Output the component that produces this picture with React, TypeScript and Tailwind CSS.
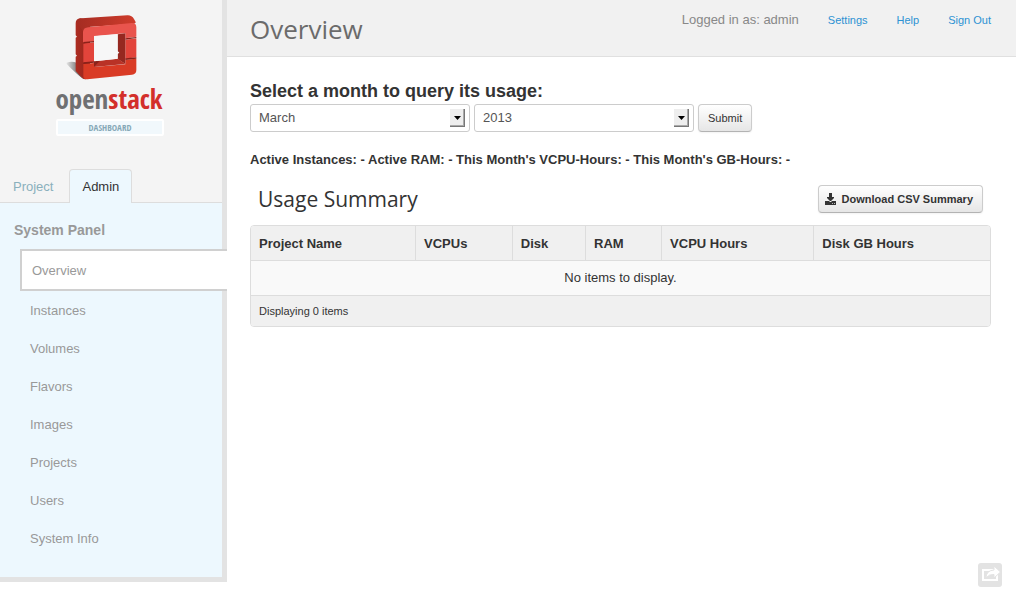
import type { ReactNode } from "react";

const NAV_ITEMS = ["Instances", "Volumes", "Flavors", "Images", "Projects", "Users", "System Info"];
const MONTHS = ["January", "February", "March", "April", "May", "June", "July", "August", "September", "October", "November", "December"];
const YEARS = ["2011", "2012", "2013"];

function CubeLogo() {
  return (
    <svg width="74" height="67" viewBox="75 40 222 201" aria-hidden="true">
      <defs>
        <linearGradient id="shade" x1="1" y1="0" x2="0" y2="0">
          <stop offset="0" stopColor="#444" />
          <stop offset="1" stopColor="#444" stopOpacity="0.1" />
        </linearGradient>
        <linearGradient id="side" x1="0" y1="0" x2="1" y2="0">
          <stop offset="0" stopColor="#ad2c21" />
          <stop offset="1" stopColor="#94261d" />
        </linearGradient>
        <linearGradient id="top" x1="0" y1="0" x2="1" y2="0">
          <stop offset="0" stopColor="#a52c22" />
          <stop offset="1" stopColor="#cf3c2c" />
        </linearGradient>
      </defs>
      <path d="M80 186Q95 181 110 186V208L130 235Q108 219 80 190Z" fill="url(#shade)" />
      <path d="M107 68Q107 55 121 53L150 60L150 226L136 236Q130 236 126 231L107 211V168L111 165L107 161V111L111 108L107 104Z" fill="url(#side)" />
      <path d="M109 63Q113 54 125 53L262 44Q275 43 282 55L287 64Q288 69 277 70L143 79Q131 81 129 92Z" fill="url(#top)" />
      <path d="M129 94Q130 81 144 80L275 67Q289 66 289 80V108L256 113V98L162 106V122L129 126Z" fill="#e9544d" />
      <path d="M130 129L162 125V183L130 186Z" fill="#e2443b" />
      <path d="M256 117L289 113V170L256 174Z" fill="#e2443b" />
      <path d="M130 190L162 187V199L256 191V177L289 174V208Q289 221 276 222L142 236Q130 237 130 226Z" fill="#d93b25" />
      <path d="M130 124L162 121V125L130 128ZM256 113L289 109V112L256 117ZM130 185L162 182V186L130 190ZM256 173L289 170V174L256 178Z" fill="#8a2119" />
      <path d="M233 101L256 98V190L233 175Z" fill="#952820" />
      <path d="M162 182L234 174L256 190L162 199Z" fill="#b93226" />
      <path d="M162 182L180 180L164 197H162Z" fill="#8c231b" />
      <path d="M163 107L233 101V151L238 156L233 160V174L163 182Z" fill="#f7f7f7" />
    </svg>
  );
}

function Picker({ id, label, value, options }: { id: string; label: string; value: string; options: string[] }) {
  return (
    <div className="relative w-[220px]">
      <select
        id={id}
        aria-label={label}
        defaultValue={value}
        className="block h-7 w-full appearance-none rounded-[3px] border border-[#ccc] bg-white pl-2 pr-6 text-[13px] text-[#555]"
      >
        {options.map((option) => (
          <option key={option}>{option}</option>
        ))}
      </select>
      <span className="pointer-events-none absolute right-[5px] top-[5px] flex h-[18px] w-[15px] items-center justify-center border-b border-r border-[#777] bg-[#eee] shadow-[inset_-1px_-1px_0_#aaa]">
        <svg width="7" height="4" viewBox="0 0 7 4" aria-hidden="true">
          <path d="M0 0H7L3.5 4Z" fill="#000" />
        </svg>
      </span>
    </div>
  );
}

const BUTTON =
  "flex h-7 cursor-pointer items-center rounded-[4px] border border-[#ccc] border-b-[#b3b3b3] bg-linear-to-b from-white to-[#e6e6e6] text-[11px] text-[#333] shadow-[0_1px_2px_rgba(0,0,0,0.05)]";

function HeadCell({ width, children }: { width?: string; children: ReactNode }) {
  return (
    <th scope="col" className={`${width ?? ""} h-[35px] border-b border-l border-[#ddd] px-2 pt-[2px] text-left font-bold first:border-l-0`}>
      {children}
    </th>
  );
}

export default function App() {
  return (
    <div className="flex min-h-screen items-start bg-white font-['Liberation_Sans',Arial,sans-serif] text-[13px] leading-[18px] text-[#333]">
      <aside className="w-[227px] shrink-0 border-b-[5px] border-[#e3e3e3] bg-[#edf8fe]">
        <div className="border-r-[5px] border-[#e3e3e3] bg-[#f4f4f4]">
          <a href="#home" aria-label="OpenStack Dashboard" className="flex flex-col items-center pr-[2px] pt-[14px]">
            <span className="pr-4">
              <CubeLogo />
            </span>
            <span className="flex h-9 items-center pr-[2px] font-['Open_Sans_Condensed','DejaVu_Sans_Condensed',sans-serif] text-[27px] leading-9 text-[#6f7072]">
              open<span className="font-bold text-[#d32f2b]">stack</span>
            </span>
            <span className="mt-[2px] flex h-[17px] w-[108px] items-center justify-center rounded-[2px] border-2 border-white bg-[#f1f8fc] font-['Open_Sans_Condensed','DejaVu_Sans_Condensed',sans-serif] text-[9px] text-[#86a8b7]">
              DASHBOARD
            </span>
          </a>
          <nav aria-label="Dashboards" className="mt-[33px] flex h-[34px] border-b border-[#ddd]">
            <a href="#project" className="px-[13px] pt-[9px] text-[#8ab0bc]">
              Project
            </a>
            <a href="#admin" className="ml-[3px] h-[34px] rounded-t-[4px] border border-b-0 border-[#ddd] bg-[#edf8fe] px-3 pt-2 text-[#333]">
              Admin
            </a>
          </nav>
        </div>
        <div className="flex text-[#999]">
          <nav aria-labelledby="panel-title" className="min-w-0 grow pb-5">
            <h4 id="panel-title" className="mb-[10px] ml-[14px] mt-[18px] text-sm font-bold leading-[18px]">
              System Panel
            </h4>
            <ul>
              <li className="relative ml-5 mr-[-5px]">
                <a href="#overview" className="flex h-[42px] items-center border-2 border-r-0 border-[#d0d0d0] bg-white pl-[10px] pt-[2px]">
                  Overview
                </a>
              </li>
              {NAV_ITEMS.map((item) => (
                <li key={item}>
                  <a href={`#${item.toLowerCase().replace(" ", "-")}`} className="flex h-[38px] items-center pl-[30px] pt-[2px]">
                    {item}
                  </a>
                </li>
              ))}
            </ul>
          </nav>
          <div className="w-[5px] shrink-0 bg-[#e3e3e3]" />
        </div>
      </aside>

      <div className="min-w-0 grow">
        <header className="flex h-[57px] items-start justify-between border-b border-[#e0e0e0] bg-[#f1f1f1] pl-[23px] pr-[25px]">
          <h1 className="pt-[11px] font-['Open_Sans',sans-serif] text-[26px] leading-9 text-[#6b6b6b]">Overview</h1>
          <div className="flex items-center gap-[29px] pt-[11px] text-[11px] text-[#2d92d3]">
            <span className="text-[13px] text-[#888]">Logged in as: admin</span>
            <a href="#settings">Settings</a>
            <a href="#help">Help</a>
            <a href="#signout">Sign Out</a>
          </div>
        </header>

        <main className="pl-[23px] pr-[25px] pt-[22px]">
          <form onSubmit={(event) => event.preventDefault()}>
            <h3 className="text-lg font-bold leading-[25px]">Select a month to query its usage:</h3>
            <div className="flex gap-1">
              <Picker id="month" label="Month" value="March" options={MONTHS} />
              <Picker id="year" label="Year" value="2013" options={YEARS} />
              <button type="submit" className={`${BUTTON} px-[9px]`}>
                Submit
              </button>
            </div>
          </form>

          <p className="mt-[19px] font-bold">
            Active Instances: - Active RAM: - This Month's VCPU-Hours: - This Month's GB-Hours: -
          </p>

          <div className="mb-3 mt-4 flex h-7 items-center justify-between px-2">
            <h3 className="font-['Open_Sans',sans-serif] text-[21px] leading-7">Usage Summary</h3>
            <button type="button" className={`${BUTTON} gap-[5px] px-[6px] pr-[9px] font-bold`}>
              <svg width="12" height="12" viewBox="0 0 12 12" aria-hidden="true">
                <path d="M4 0H7V4H9V5L6 8H5L2 5V4H4Z" fill="#333" />
                <path d="M0 8H4L5 9H6L7 8H11V12H0Z" fill="#333" />
                <path d="M7 10H8V11H7ZM9 10H10V11H9Z" fill="#bbb" />
              </svg>
              Download CSV Summary
            </button>
          </div>

          <div className="overflow-hidden rounded-[4px] border border-[#ddd]">
            <table className="w-full table-fixed border-separate border-spacing-0">
              <thead className="bg-[#f0f0f0]">
                <tr>
                  <HeadCell width="w-[22.2%]">Project Name</HeadCell>
                  <HeadCell width="w-[13.1%]">VCPUs</HeadCell>
                  <HeadCell width="w-[9.9%]">Disk</HeadCell>
                  <HeadCell width="w-[10.3%]">RAM</HeadCell>
                  <HeadCell width="w-[20.6%]">VCPU Hours</HeadCell>
                  <HeadCell>Disk GB Hours</HeadCell>
                </tr>
              </thead>
              <tbody>
                <tr>
                  <td colSpan={6} className="h-[34px] bg-[#f9f9f9] text-center">
                    No items to display.
                  </td>
                </tr>
              </tbody>
              <tfoot>
                <tr>
                  <td colSpan={6} className="h-[31px] border-t border-[#ddd] bg-[#f0f0f0] px-2 text-[11px]">
                    Displaying 0 items
                  </td>
                </tr>
              </tfoot>
            </table>
          </div>
        </main>
      </div>

      <button
        type="button"
        aria-label="Share"
        className="fixed bottom-[14px] right-[14px] size-6 cursor-pointer rounded-[3px] bg-[#e3e3e3]"
      >
        <svg width="24" height="24" viewBox="0 0 24 24" aria-hidden="true">
          <path d="M5 7H19V17H5Z" fill="none" stroke="#fff" strokeWidth="2" />
          <path d="M16 3L22.500 9L16 15V11.500Q11 11 8 15Q8 7.500 16 7Z" fill="#fff" stroke="#e3e3e3" strokeWidth="1" />
        </svg>
      </button>
    </div>
  );
}
